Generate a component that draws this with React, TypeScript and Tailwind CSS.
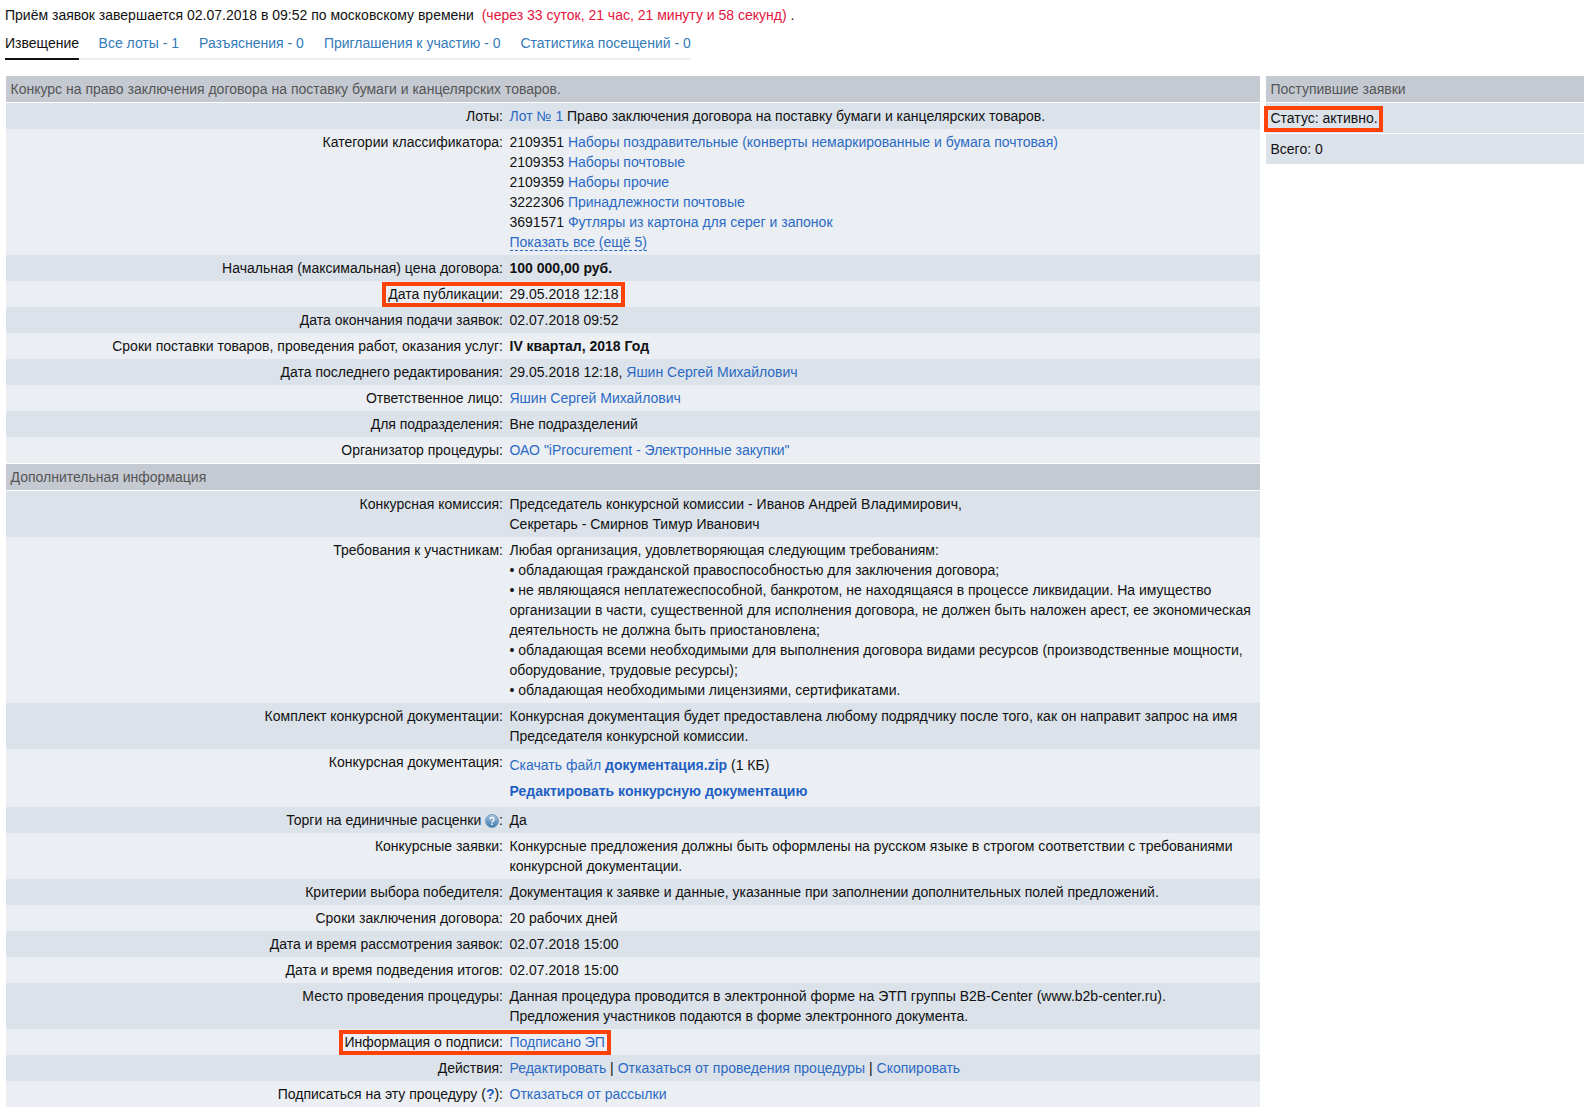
import type { ReactNode } from 'react'

const A = ({ children, bold }: { children: ReactNode; bold?: boolean }) => (
  <a href="#" className={bold ? 'font-bold text-[#1f5fc4]' : 'text-[#2b6ac4]'}>
    {children}
  </a>
)

// orange annotation box drawn over a row
const Mark = ({ className }: { className: string }) => (
  <span className={`absolute border-4 border-[#ff4208] pointer-events-none ${className}`} />
)

interface RowData {
  label: ReactNode
  value: ReactNode
  mark?: string
}

const mainRows: RowData[] = [
  {
    label: 'Лоты:',
    value: (
      <>
        <A>Лот № 1</A> Право заключения договора на поставку бумаги и канцелярских товаров.
      </>
    ),
  },
  {
    label: 'Категории классификатора:',
    value: (
      <>
        2109351 <A>Наборы поздравительные (конверты немаркированные и бумага почтовая)</A>
        <br />
        2109353 <A>Наборы почтовые</A>
        <br />
        2109359 <A>Наборы прочие</A>
        <br />
        3222306 <A>Принадлежности почтовые</A>
        <br />
        3691571 <A>Футляры из картона для серег и запонок</A>
        <br />
        <a href="#" className="text-[#2b6ac4] border-b border-dashed border-[#2b6ac4]">
          Показать все (ещё 5)
        </a>
      </>
    ),
  },
  { label: 'Начальная (максимальная) цена договора:', value: <b>100 000,00 руб.</b> },
  {
    label: 'Дата публикации:',
    value: '29.05.2018 12:18',
    mark: 'left-[376px] w-[243px] top-[1px] h-[25px]',
  },
  { label: 'Дата окончания подачи заявок:', value: '02.07.2018 09:52' },
  { label: 'Сроки поставки товаров, проведения работ, оказания услуг:', value: <b>IV квартал, 2018 Год</b> },
  {
    label: 'Дата последнего редактирования:',
    value: (
      <>
        29.05.2018 12:18, <A>Яшин Сергей Михайлович</A>
      </>
    ),
  },
  { label: 'Ответственное лицо:', value: <A>Яшин Сергей Михайлович</A> },
  { label: 'Для подразделения:', value: 'Вне подразделений' },
  { label: 'Организатор процедуры:', value: <A>ОАО "iProcurement - Электронные закупки"</A> },
]

const HelpIcon = () => (
  <svg viewBox="0 0 16 16" className="inline-block w-[14px] h-[14px] align-[-3px]">
    <defs>
      <linearGradient id="help" x1="0" y1="0" x2="0" y2="1">
        <stop offset="0" stopColor="#a9c8e2" />
        <stop offset="1" stopColor="#3a78ae" />
      </linearGradient>
    </defs>
    <circle cx="8" cy="8" r="7.4" fill="url(#help)" stroke="#6f93b3" strokeWidth="1" />
    <path d="M5.9 6.2a2.2 2.2 0 1 1 3.3 1.9c-.8.5-1.2.8-1.2 1.7" fill="none" stroke="#fff" strokeWidth="1.6" />
    <rect x="7.1" y="10.8" width="1.8" height="1.8" fill="#fff" />
  </svg>
)

const extraRows: RowData[] = [
  {
    label: 'Конкурсная комиссия:',
    value: (
      <>
        Председатель конкурсной комиссии - Иванов Андрей Владимирович,
        <br />
        Секретарь - Смирнов Тимур Иванович
      </>
    ),
  },
  {
    label: 'Требования к участникам:',
    value: (
      <>
        Любая организация, удовлетворяющая следующим требованиям:
        <br />• обладающая гражданской правоспособностью для заключения договора;
        <br />• не являющаяся неплатежеспособной, банкротом, не находящаяся в процессе ликвидации. На имущество организации в части, существенной для исполнения договора, не должен быть наложен арест, ее экономическая деятельность не должна быть приостановлена;
        <br />• обладающая всеми необходимыми для выполнения договора видами ресурсов (производственные мощности, оборудование, трудовые ресурсы);
        <br />• обладающая необходимыми лицензиями, сертификатами.
      </>
    ),
  },
  {
    label: 'Комплект конкурсной документации:',
    value: 'Конкурсная документация будет предоставлена любому подрядчику после того, как он направит запрос на имя Председателя конкурсной комиссии.',
  },
  {
    label: 'Конкурсная документация:',
    value: (
      <div className="pt-[3px] pb-[3px]">
        <div>
          <A>Скачать файл</A> <A bold>документация.zip</A> (1 КБ)
        </div>
        <div className="mt-[6px]">
          <A bold>Редактировать конкурсную документацию</A>
        </div>
      </div>
    ),
  },
  {
    label: (
      <>
        Торги на единичные расценки <HelpIcon />:
      </>
    ),
    value: 'Да',
  },
  {
    label: 'Конкурсные заявки:',
    value: 'Конкурсные предложения должны быть оформлены на русском языке в строгом соответствии с требованиями конкурсной документации.',
  },
  { label: 'Критерии выбора победителя:', value: 'Документация к заявке и данные, указанные при заполнении дополнительных полей предложений.' },
  { label: 'Сроки заключения договора:', value: '20 рабочих дней' },
  { label: 'Дата и время рассмотрения заявок:', value: '02.07.2018 15:00' },
  { label: 'Дата и время подведения итогов:', value: '02.07.2018 15:00' },
  {
    label: 'Место проведения процедуры:',
    value: (
      <>
        Данная процедура проводится в электронной форме на ЭТП группы B2B-Center (www.b2b-center.ru).
        <br />
        Предложения участников подаются в форме электронного документа.
      </>
    ),
  },
  {
    label: 'Информация о подписи:',
    value: <A>Подписано ЭП</A>,
    mark: 'left-[333px] w-[272px] top-[1px] h-[25px]',
  },
  {
    label: 'Действия:',
    value: (
      <>
        <A>Редактировать</A> | <A>Отказаться от проведения процедуры</A> | <A>Скопировать</A>
      </>
    ),
  },
  {
    label: (
      <>
        Подписаться на эту процедуру (<b className="text-[#1f5fc4]">?</b>):
      </>
    ),
    value: <A>Отказаться от рассылки</A>,
  },
]

function Row({ row, dark }: { row: RowData; dark: boolean }) {
  return (
    <div className={`relative flex py-[3px] leading-5 ${dark ? 'bg-[#dbe2ea]' : 'bg-[#ebeff3]'}`}>
      <div className="w-[497px] shrink-0 text-right">{row.label}</div>
      <div className="pl-[6.5px] pr-[5px] min-w-0 flex-1">{row.value}</div>
      {row.mark && <Mark className={row.mark} />}
    </div>
  )
}

function SectionTitle({ children }: { children: ReactNode }) {
  return <div className="h-[26px] mb-px bg-[#c5cad2] px-[4.5px] leading-[26px] text-[#555]">{children}</div>
}

const tabs = ['Все лоты - 1', 'Разъяснения - 0', 'Приглашения к участию - 0', 'Статистика посещений - 0']

export default function App() {
  return (
    <div className="h-[1113px] bg-white text-[14px] text-[#111] font-['Liberation_Sans',Arial,sans-serif] overflow-hidden">
      <div className="pl-[5px] pt-[5px] leading-5 whitespace-pre">
        Приём заявок завершается 02.07.2018 в 09:52 по московскому времени{'  '}
        <span className="text-[#e5133d]">(через 33 суток, 21 час, 21 минуту и 58 секунд)</span> .
      </div>

      <div className="ml-[5px] mt-[7px] w-[686px] flex gap-5 border-b-[2px] border-[#eee] h-[28px] leading-5 whitespace-nowrap">
        <div className="pt-[1px] h-[28px] -mr-[0.5px] border-b-[2px] border-[#111]">Извещение</div>
        {tabs.map((t) => (
          <a key={t} href="#" className="pt-[1px] text-[#337ab7]">
            {t}
          </a>
        ))}
      </div>

      <div className="flex mt-[16px] pl-[6px]">
        <div className="w-[1254px] shrink-0">
          <SectionTitle>Конкурс на право заключения договора на поставку бумаги и канцелярских товаров.</SectionTitle>
          {mainRows.map((r, i) => (
            <Row key={i} row={r} dark={i % 2 === 0} />
          ))}
          <div className="h-px" />
          <SectionTitle>Дополнительная информация</SectionTitle>
          {extraRows.map((r, i) => (
            <Row key={i} row={r} dark={i % 2 === 0} />
          ))}
        </div>

        <div className="w-[318px] ml-[6px]">
          <SectionTitle>Поступившие заявки</SectionTitle>
          <div className="relative h-[30px] mb-px bg-[#dbe2ea] px-[4.5px] leading-[30px]">
            Статус: активно.
            <Mark className="-left-[2px] top-[3px] w-[119px] h-[26px]" />
          </div>
          <div className="h-[30px] bg-[#dbe2ea] px-[4.5px] leading-[30px]">Всего: 0</div>
        </div>
      </div>
    </div>
  )
}
